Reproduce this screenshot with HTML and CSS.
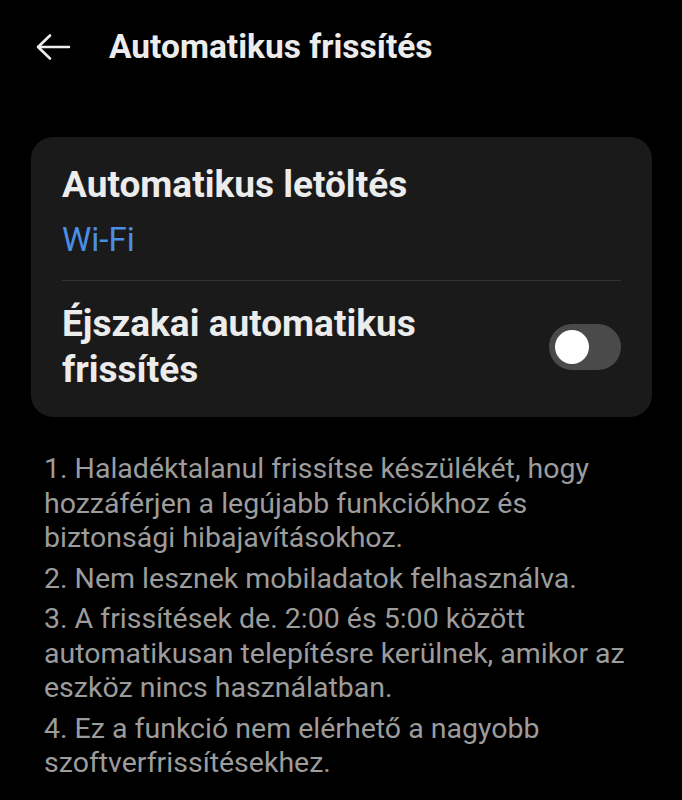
FILE: index.html
```html
<!DOCTYPE html>
<html lang="hu">
<head>
    <meta charset="UTF-8">
    <meta name="viewport" content="width=device-width, initial-scale=1.0">
    <title>Automatikus frissítés</title>
    <link rel="stylesheet" href="styles.css">
</head>
<body>
    <header class="top-bar">
        <button class="back-btn" aria-label="Vissza">
            <svg width="36" height="28" viewBox="0 0 36 28">
                <path d="M34 14H3M15 2.5L3 14l12 11.5" fill="none" stroke="#eee" stroke-width="2.6" stroke-linecap="round" stroke-linejoin="round"/>
            </svg>
        </button>
        <h1>Automatikus frissítés</h1>
    </header>

    <div class="card">
        <div class="row">
            <div class="row-title">Automatikus letöltés</div>
            <div class="row-value">Wi-Fi</div>
        </div>
        <div class="divider"></div>
        <div class="row row-switch">
            <div class="row-title">Éjszakai automatikus<br>frissítés</div>
            <div class="switch"><span class="knob"></span></div>
        </div>
    </div>

    <div class="notes">
        <p>1. Haladéktalanul frissítse készülékét, hogy hozzáférjen a legújabb funkciókhoz és biztonsági hibajavításokhoz.</p>
        <p>2. Nem lesznek mobiladatok felhasználva.</p>
        <p>3. A frissítések de. 2:00 és 5:00 között automatikusan telepítésre kerülnek, amikor az eszköz nincs használatban.</p>
        <p>4. Ez a funkció nem elérhető a nagyobb szoftverfrissítésekhez.</p>
    </div>
</body>
</html>
```

FILE: styles.css
```css
body {
    margin: 0;
    padding: 0;
    background-color: #000;
    color: #ececec;
    font-family: Roboto, "Noto Sans", sans-serif;
    width: 682px;
    height: 800px;
    overflow: hidden;
}

.top-bar {
    display: flex;
    align-items: center;
    height: 94px;
    padding-left: 35px;
}

.back-btn {
    background: none;
    border: none;
    padding: 0;
    width: 36px;
    height: 28px;
    margin-right: 38px;
    display: flex;
    align-items: center;
}

.top-bar h1 {
    margin: 0;
    font-size: 33.5px;
    line-height: 40px;
    font-weight: 700;
    color: #ececec;
}

.card {
    margin: 43px 30px 0 31px;
    background-color: #1a1a1a;
    border-radius: 22px;
    padding: 0 31px;
}

.row {
    padding: 26px 0 20px;
}

.row-title {
    font-size: 37px;
    font-weight: 700;
    line-height: 44px;
    color: #ececec;
}

.row-value {
    margin-top: 13px;
    font-size: 33px;
    line-height: 40px;
    color: #4a8fe6;
}

.divider {
    height: 1px;
    background-color: #333;
}

.row-switch {
    display: flex;
    align-items: center;
    justify-content: space-between;
    padding: 20px 0 24px;
}

.row-switch .row-title {
    line-height: 46px;
}

.switch {
    width: 72px;
    height: 46px;
    border-radius: 23px;
    background-color: #4a4a4a;
    display: flex;
    align-items: center;
    padding-left: 6px;
    box-sizing: border-box;
}

.knob {
    width: 34px;
    height: 34px;
    border-radius: 50%;
    background-color: #fff;
}

.notes {
    padding: 35px 30px 0 44px;
    color: #9c9c9c;
    font-size: 28.5px;
    line-height: 34.5px;
}

.notes p {
    margin: 0 0 6px;
}
```
